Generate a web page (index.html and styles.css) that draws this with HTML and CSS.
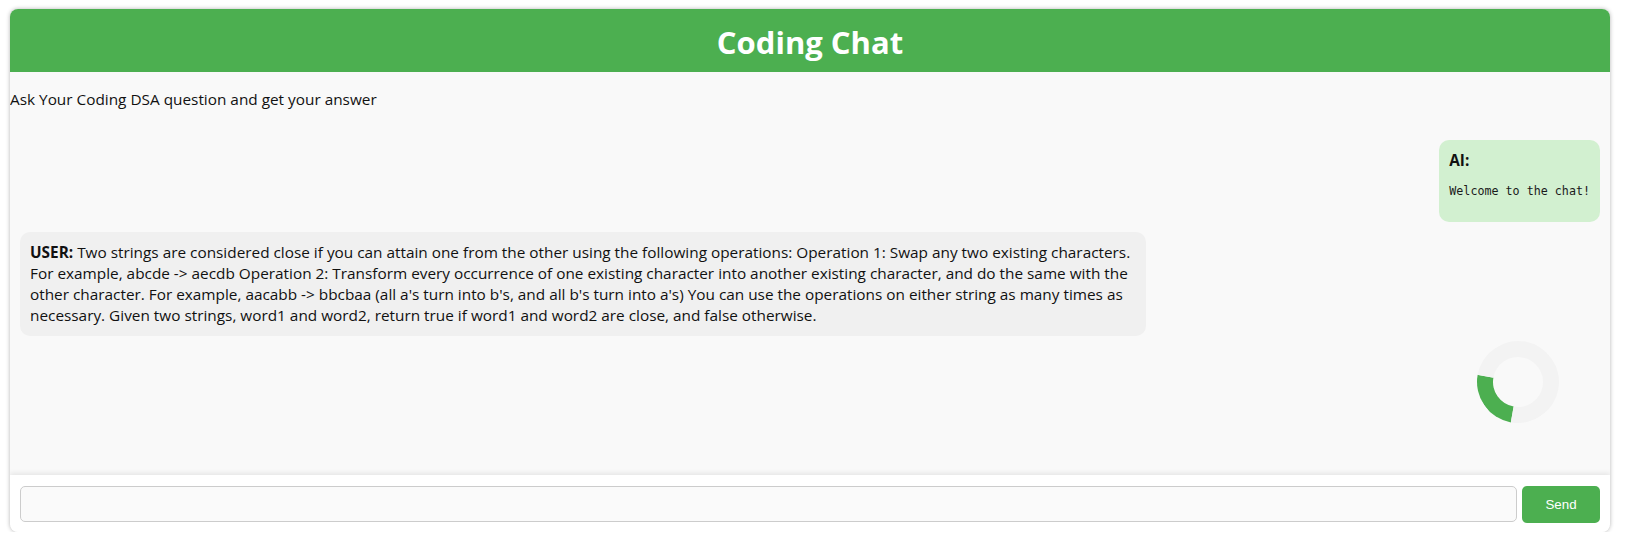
FILE: index.html
```html
<!DOCTYPE html>
<html lang="en">
<head>
<meta charset="utf-8">
<title>Coding Chat</title>
<link rel="stylesheet" href="styles.css">
</head>
<body>
<div class="app">
  <header class="app-header">
    <h1 class="title">Coding Chat</h1>
  </header>
  <main class="main">
    <p class="intro">Ask Your Coding DSA question and get your answer</p>
    <div class="chat-box">
      <div class="message ai">
        <div class="sender">AI:</div>
        <pre class="code">Welcome to the chat!</pre>
      </div>
      <div class="message user"><strong>USER:</strong> Two strings are considered close if you can attain one from the other using the following operations: Operation 1: Swap any two existing characters. For example, abcde -&gt; aecdb Operation 2: Transform every occurrence of one existing character into another existing character, and do the same with the other character. For example, aacabb -&gt; bbcbaa (all a's turn into b's, and all b's turn into a's) You can use the operations on either string as many times as necessary. Given two strings, word1 and word2, return true if word1 and word2 are close, and false otherwise.</div>
      <div class="spinner"></div>
    </div>
  </main>
  <form class="input-area">
    <input class="text-input" type="text">
    <button class="send-btn" type="button">Send</button>
  </form>
</div>
</body>
</html>
```
FILE: styles.css
```css
html, body {
  margin: 0;
  padding: 0;
  background: #ffffff;
}

body {
  font-family: "Open Sans", "Noto Sans", sans-serif;
  font-size: 15.35px;
  line-height: 21px;
  color: #111;
}

.app {
  width: 1600px;
  height: 523px;
  margin: 9px 0 0 10px;
  display: flex;
  flex-direction: column;
  border-radius: 8px;
  overflow: hidden;
  background: #f9f9f9;
  box-shadow: 0 0 4px rgba(0, 0, 0, 0.3);
}

.app-header {
  background: #4caf50;
  height: 63px;
  display: flex;
  align-items: center;
  justify-content: center;
  flex-shrink: 0;
}

.title {
  margin: 2px 0 0 0;
  color: #fff;
  font-size: 31px;
  font-weight: 700;
  line-height: 40px;
}

.main {
  flex: 1;
  display: flex;
  flex-direction: column;
  background: #f9f9f9;
  overflow: hidden;
}

.intro {
  margin: 17px 0 20px 0;
}

.chat-box {
  padding: 10px;
  display: flex;
  flex-direction: column;
  gap: 10px;
}

.message {
  padding: 10px;
  border-radius: 10px;
  max-width: 70%;
}

.ai {
  align-self: flex-end;
  background: #d2f0d0;
}

.user {
  align-self: flex-start;
  background: #f0f0f0;
}

.sender {
  font-weight: 700;
}

.code {
  margin: 13px 0;
  font-family: "DejaVu Sans Mono", "Liberation Mono", monospace;
  font-size: 11.7px;
  line-height: 15px;
  color: #1a1a1a;
}

.spinner {
  align-self: flex-end;
  width: 50px;
  height: 50px;
  margin: -5px 41px 0 0;
  border: 16px solid #f3f3f3;
  border-top-color: #4caf50;
  border-radius: 50%;
  transform: rotate(235deg);
}

.input-area {
  margin: 0;
  flex-shrink: 0;
  display: flex;
  gap: 5px;
  padding: 11px 10px 9px 10px;
  background: #fff;
  box-shadow: 0 -2px 5px rgba(0, 0, 0, 0.08);
  position: relative;
}

.text-input {
  flex: 1;
  height: 36px;
  box-sizing: border-box;
  border: 1px solid #ccc;
  border-radius: 5px;
  background: #fafafa;
  padding: 0 10px;
  font-family: "Open Sans", sans-serif;
  font-size: 15px;
}

.send-btn {
  width: 78px;
  height: 37px;
  border: none;
  border-radius: 5px;
  background: #4caf50;
  color: #fff;
  font-family: "Liberation Sans", Arial, sans-serif;
  font-size: 13.33px;
}
```
